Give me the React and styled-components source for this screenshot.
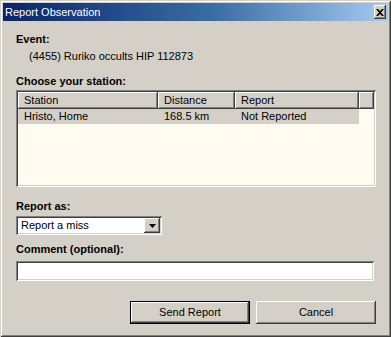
import React from "react";
import styled, { createGlobalStyle } from "styled-components";

const Global = createGlobalStyle`
  html, body { margin: 0; padding: 0; background: #d4d0c8; }
  body { font-family: "Liberation Sans", Arial, sans-serif; font-size: 11px; }
  * { box-sizing: border-box; }
`;

const raised = `
  box-shadow: inset -1px -1px 0 #404040, inset 1px 1px 0 #ffffff, inset -2px -2px 0 #808080, inset 2px 2px 0 #d4d0c8;
`;
const sunken = `
  box-shadow: inset 1px 1px 0 #808080, inset -1px -1px 0 #ffffff, inset 2px 2px 0 #404040, inset -2px -2px 0 #d4d0c8;
`;

const Window = styled.div`
  width: 391px;
  height: 337px;
  background: #d4d0c8;
  padding: 3px;
  display: flex;
  flex-direction: column;
  box-shadow: inset 1px 1px 0 #d4d0c8, inset -1px -1px 0 #404040, inset 2px 2px 0 #ffffff, inset -2px -2px 0 #808080;
`;

const TitleBar = styled.div`
  height: 18px;
  flex: none;
  display: flex;
  align-items: center;
  justify-content: space-between;
  padding: 0 2px 0 2px;
  background: linear-gradient(to right, #0a246a 0%, #3a6ea5 55%, #a6caf0 100%);
`;

const TitleText = styled.span`
  color: #ffffff;
  font-size: 11px;
  line-height: 13px;
`;

const CloseButton = styled.div`
  width: 12px;
  height: 14px;
  background: #d4d0c8;
  ${raised}
  display: flex;
  align-items: center;
  justify-content: center;
`;

const Content = styled.div`
  flex: 1;
  display: flex;
  flex-direction: column;
  padding: 12px 13px 0 13px;
`;

const Label = styled.div`
  font-weight: bold;
  line-height: 13px;
  color: #000;
  margin-top: ${(p) => p.$mt || 0}px;
`;

const Value = styled.div`
  line-height: 13px;
  color: #000;
  padding-left: 13px;
  margin-top: 4px;
`;

const ListBox = styled.div`
  margin-top: 2px;
  width: 360px;
  height: 97px;
  background: #fffbf0;
  padding: 2px;
  ${sunken}
  display: flex;
  flex-direction: column;
`;

const HeaderRow = styled.div`
  display: flex;
  height: 17px;
  flex: none;
`;

const HeaderCell = styled.div`
  width: ${(p) => p.$w}px;
  flex: ${(p) => (p.$fill ? "1" : "none")};
  background: #d4d0c8;
  ${raised}
  padding: 2px 6px 0 6px;
  line-height: 13px;
  white-space: nowrap;
  overflow: hidden;
`;

const DataRow = styled.div`
  display: flex;
  height: 15px;
  width: 341px;
  background: ${(p) => (p.$selected ? "#d4d0c8" : "transparent")};
`;

const DataCell = styled.div`
  width: ${(p) => p.$w}px;
  padding: 1px 6px 0 6px;
  line-height: 13px;
  white-space: nowrap;
`;

const Select = styled.div`
  margin-top: 3px;
  width: 146px;
  height: 19px;
  background: #fff;
  padding: 2px;
  ${sunken}
  display: flex;
  align-items: stretch;
`;

const SelectText = styled.div`
  flex: 1;
  padding: 1px 3px;
  line-height: 13px;
`;

const ArrowButton = styled.div`
  width: 16px;
  background: #d4d0c8;
  ${raised}
  display: flex;
  align-items: center;
  justify-content: center;
`;

const TextInput = styled.div`
  margin-top: 5px;
  width: 358px;
  height: 20px;
  background: #fff;
  ${sunken}
`;

const ButtonRow = styled.div`
  margin-top: 20px;
  display: flex;
  justify-content: flex-end;
  gap: 6px;
  width: 360px;
`;

const Button = styled.div`
  width: 120px;
  height: 23px;
  display: flex;
  align-items: center;
  justify-content: center;
  background: #d4d0c8;
  line-height: 13px;
  ${(p) =>
    p.$default
      ? `box-shadow: inset 0 0 0 1px #000000, inset -2px -2px 0 #404040, inset 2px 2px 0 #ffffff, inset -3px -3px 0 #808080;`
      : raised}
`;

export default function App() {
  return (
    <>
      <Global />
      <Window>
        <TitleBar>
          <TitleText>Report Observation</TitleText>
          <CloseButton>
            <svg width="8" height="7" viewBox="0 0 8 7">
              <path d="M0 0h2l2 2 2-2h2L5 3.5 8 7H6L4 5 2 7H0l3-3.5z" fill="#000" />
            </svg>
          </CloseButton>
        </TitleBar>
        <Content>
          <Label>Event:</Label>
          <Value>(4455) Ruriko occults HIP 112873</Value>
          <Label $mt={12}>Choose your station:</Label>
          <ListBox>
            <HeaderRow>
              <HeaderCell $w={140}>Station</HeaderCell>
              <HeaderCell $w={77}>Distance</HeaderCell>
              <HeaderCell $w={124}>Report</HeaderCell>
              <HeaderCell $fill />
            </HeaderRow>
            <DataRow $selected>
              <DataCell $w={140}>Hristo, Home</DataCell>
              <DataCell $w={77}>168.5 km</DataCell>
              <DataCell $w={124}>Not Reported</DataCell>
            </DataRow>
          </ListBox>
          <Label $mt={13}>Report as:</Label>
          <Select>
            <SelectText>Report a miss</SelectText>
            <ArrowButton>
              <svg width="7" height="4" viewBox="0 0 7 4">
                <path d="M0 0h7L3.5 4z" fill="#000" />
              </svg>
            </ArrowButton>
          </Select>
          <Label $mt={8}>Comment (optional):</Label>
          <TextInput />
          <ButtonRow>
            <Button $default>Send Report</Button>
            <Button>Cancel</Button>
          </ButtonRow>
        </Content>
      </Window>
    </>
  );
}
